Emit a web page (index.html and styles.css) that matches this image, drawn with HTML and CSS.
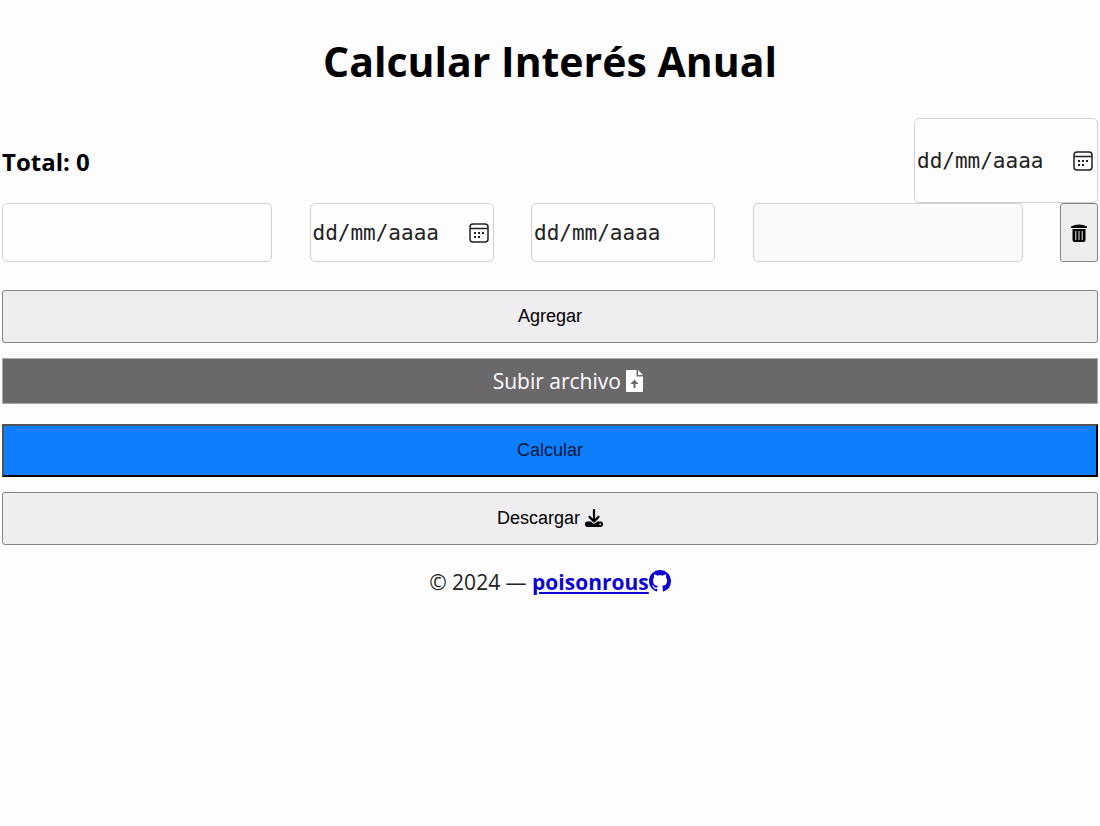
FILE: index.html
```html
<!DOCTYPE html>
<html lang="es">
<head>
    <meta charset="UTF-8">
    <meta name="viewport" content="width=device-width, initial-scale=1.0">
    <title>Calcular Interés Anual</title>
    <link rel="stylesheet" href="styles.css">
</head>
<body>
    <svg class="sprite" aria-hidden="true">
        <symbol id="calendar" viewBox="0 0 20 20">
            <rect x="1" y="1" width="18" height="18" rx="3" fill="none" stroke="currentColor" stroke-width="1.500"/>
            <path d="M1 5.500h18" stroke="currentColor" stroke-width="1.500"/>
            <path d="M9 9h2v2H9zM13 9h2v2h-2zM5 9h2v2H5zM5 13h2v2H5zM9 13h2v2H9z" fill="currentColor"/>
        </symbol>
    </svg>

    <main class="container">
        <h1>Calcular Interés Anual</h1>

        <div class="header">
            <h2>Total: <span id="total">0</span></h2>
            <div class="date tall">
                <input type="text" id="fechaCorte" placeholder="dd/mm/aaaa" aria-label="Fecha de corte">
                <button type="button" class="picker" aria-label="Abrir calendario"><svg><use href="#calendar"/></svg></button>
            </div>
        </div>

        <form id="formulario">
            <div class="fila">
                <input type="text" class="monto" aria-label="Monto">
                <div class="date">
                    <input type="text" placeholder="dd/mm/aaaa" aria-label="Fecha de inicio">
                    <button type="button" class="picker" aria-label="Abrir calendario"><svg><use href="#calendar"/></svg></button>
                </div>
                <div class="date">
                    <input type="text" placeholder="dd/mm/aaaa" aria-label="Fecha final" readonly>
                </div>
                <input type="text" class="monto" aria-label="Interés" disabled>
                <button type="button" class="eliminar" aria-label="Eliminar">
                    <svg viewBox="0 0 16 18"><path d="M0 2.500Q4 .5 8 .5t8 2V4H0z"/><path fill-rule="evenodd" d="M1.500 5h13v11a2 2 0 0 1-2 2h-9a2 2 0 0 1-2-2zM4.300 7v9h1V7zM7.500 7v9h1V7zM10.700 7v9h1V7z"/></svg>
                </button>
            </div>

            <button type="button" class="boton">Agregar</button>

            <label class="subir" for="archivo">Subir archivo
                <svg viewBox="0 0 17 22"><path fill-rule="evenodd" d="M1 0h9.500v6.500H17V21a1 1 0 0 1-1 1H1a1 1 0 0 1-1-1V1a1 1 0 0 1 1-1zM8.500 9.500l-4 4.500h3v4h2v-4h3z"/><path d="M12 0l5 5h-5z"/></svg>
            </label>
            <input type="file" id="archivo">

            <button type="submit" class="boton calcular">Calcular</button>
            <button type="button" class="boton">Descargar
                <svg viewBox="0 0 512 512"><path fill-rule="evenodd" d="M288 32c0-17.700-14.300-32-32-32s-32 14.300-32 32v242.700l-73.400-73.400c-12.500-12.500-32.800-12.500-45.300 0s-12.500 32.800 0 45.300l128 128c12.500 12.500 32.800 12.500 45.300 0l128-128c12.500-12.500 12.500-32.800 0-45.300s-32.800-12.500-45.300 0L288 274.700V32zM64 352c-35.300 0-64 28.700-64 64v32c0 35.300 28.700 64 64 64h384c35.300 0 64-28.700 64-64v-32c0-35.300-28.700-64-64-64H346.500l-45.300 45.300c-25 25-65.500 25-90.500 0L165.500 352H64zm368 56a24 24 0 1 1 0 48 24 24 0 1 1 0-48z"/></svg>
            </button>
        </form>
    </main>

    <footer>
        © 2024 — <a href="https://github.com/poisonrous">poisonrous<svg viewBox="0 0 16 16"><path d="M8 0C3.580 0 0 3.580 0 8c0 3.540 2.290 6.530 5.470 7.590.4.070.55-.17.55-.38 0-.19-.01-.82-.01-1.490-2.010.37-2.530-.49-2.690-.94-.09-.23-.48-.94-.82-1.130-.28-.15-.68-.52-.01-.53.63-.01 1.080.58 1.230.82.72 1.210 1.870.87 2.330.66.070-.52.28-.87.51-1.070-1.780-.2-3.640-.89-3.640-3.950 0-.87.31-1.590.82-2.150-.08-.2-.36-1.020.08-2.120 0 0 .67-.21 2.200.82.64-.18 1.320-.27 2-.27s1.360.09 2 .27c1.530-1.040 2.200-.82 2.200-.82.44 1.100.16 1.920.08 2.120.51.56.82 1.270.82 2.150 0 3.070-1.870 3.750-3.650 3.950.29.25.54.73.54 1.480 0 1.070-.01 1.930-.01 2.200 0 .21.15.46.55.38A8.010 8.010 0 0 0 16 8c0-4.420-3.580-8-8-8z"/></svg></a>
    </footer>
</body>
</html>
```

FILE: styles.css
```css
* {
    box-sizing: border-box;
}
body {
    margin: 0;
    padding: 0 2px;
    font-family: "Open Sans", "Noto Sans", sans-serif;
    font-size: 21px;
    line-height: 28px;
    background: #fefdfe;
    color: #222;
}
.sprite {
    position: absolute;
    width: 0;
    height: 0;
}
h1 {
    margin: 0;
    padding: 31px 0 27px;
    font-size: 41px;
    line-height: 60px;
    text-align: center;
    color: #000;
}
.header {
    display: flex;
    justify-content: space-between;
    align-items: center;
}
h2 {
    margin: 0;
    padding-top: 2px;
    font-size: 24px;
    line-height: 32px;
    color: #000;
}
.fila {
    display: flex;
    justify-content: space-between;
    margin-bottom: 28px;
}
.monto,
.date {
    height: 59px;
    border: 1px solid #d3cfd5;
    border-radius: 5px;
    background: #fefdfe;
}
.monto {
    width: 270px;
    padding: 0 12px;
    font-size: 18px;
}
.monto:disabled {
    background: #fbf9fc;
}
.date {
    display: flex;
    align-items: center;
    width: 184px;
    padding: 0 4px 0 2px;
}
.tall {
    height: 85px;
}
.date input {
    flex: 1;
    min-width: 0;
    padding: 0;
    border: none;
    outline: none;
    background: none;
    font-family: "DejaVu Sans Mono", monospace;
    font-size: 21px;
}
.date input::placeholder {
    color: #222;
}
.picker {
    padding: 0;
    border: none;
    background: none;
    color: #222;
    cursor: pointer;
}
.picker svg {
    display: block;
    width: 20px;
    height: 20px;
}
.eliminar,
.boton {
    border: 1px solid #858387;
    border-radius: 3px;
    background: #efedf0;
    color: #000;
    cursor: pointer;
}
.eliminar {
    width: 38px;
    padding: 0;
}
.eliminar svg {
    width: 16px;
    height: 18px;
    vertical-align: middle;
}
.boton {
    display: block;
    width: 100%;
    height: 53px;
    margin-bottom: 15px;
    font-family: "Liberation Sans", Arial, sans-serif;
    font-size: 18px;
}
.boton svg {
    width: 18px;
    height: 18px;
    vertical-align: -3px;
}
.calcular {
    border: 2px outset #000;
    border-radius: 0;
    background: #0f7efd;
    color: #061a3c;
}
.subir {
    display: block;
    margin-bottom: 20px;
    padding: 8px 0 8px 36px;
    border: 1px solid #aaa8ab;
    background: #6b686b;
    color: #fff;
    text-align: center;
    cursor: pointer;
}
.subir svg {
    width: 17px;
    height: 22px;
    vertical-align: -3px;
}
#archivo {
    display: none;
}
footer {
    padding-top: 8px;
    text-align: center;
}
footer a {
    font-weight: bold;
    color: #1005d0;
}
footer svg {
    width: 22px;
    height: 22px;
    vertical-align: -2px;
}
svg {
    fill: currentColor;
}
```
